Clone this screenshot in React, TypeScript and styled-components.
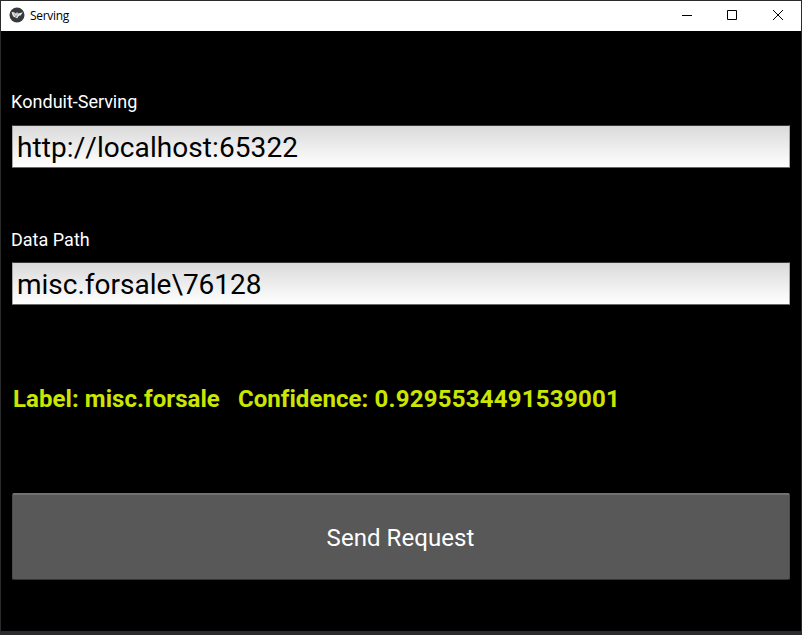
import React from 'react';
import styled, { createGlobalStyle } from 'styled-components';

const GlobalStyle = createGlobalStyle`
  * { box-sizing: border-box; }
  html, body { margin: 0; padding: 0; background: #000; overflow: hidden; }
  button, input { margin: 0; outline: none; }
`;

const Window = styled.div`
  width: 802px;
  height: 635px;
  display: flex;
  flex-direction: column;
  background: #000;
  border: 1px solid #2b2b2b;
  border-bottom: 4px solid #2c2a2e;
  font-family: Roboto, sans-serif;
  font-kerning: none;
  font-variant-ligatures: none;
`;

const TitleBar = styled.header`
  flex: none;
  height: 30px;
  display: flex;
  align-items: center;
  background: #fff;
  color: #000;
  padding-left: 8px;
`;

const AppIcon = styled.svg`
  flex: none;
  width: 16px;
  height: 16px;
  margin-bottom: 2px;
`;

const Title = styled.span`
  flex: 1;
  margin-left: 5px;
  font: 12px/16px 'Open Sans', sans-serif;
  letter-spacing: -0.3px;
`;

const WindowButton = styled.button<{ $shift?: number }>`
  width: 46px;
  height: 30px;
  padding: 0 0 2px ${(p) => p.$shift ?? 0}px;
  border: 0;
  background: transparent;
  display: flex;
  align-items: center;
  justify-content: center;
`;

const Glyph = styled.svg`
  width: 10px;
  height: 10px;
  display: block;
  fill: none;
  stroke: #000;
`;

const Content = styled.main`
  flex: 1;
  display: flex;
  flex-direction: column;
  padding: 60px 11px 0;
`;

const Field = styled.div`
  height: 138px;
`;

const Label = styled.label<{ $height: number }>`
  display: block;
  height: ${(p) => p.$height}px;
  margin-left: -1px;
  color: #fff;
  font-size: 18px;
  line-height: 22px;
`;

const TextInput = styled.input<{ $tracking?: number }>`
  display: block;
  width: 778px;
  height: 43px;
  padding: 2px 4px 0;
  border: 1px solid #a6a6a6;
  border-top-color: #3a3838;
  border-bottom-color: #6a6a6a;
  border-radius: 1px;
  background: linear-gradient(#dadada, #fff);
  color: #000;
  font-family: Roboto, sans-serif;
  font-size: 28px;
  line-height: 40px;
  font-kerning: none;
  letter-spacing: ${(p) => p.$tracking ?? 0}px;
`;

const Result = styled.output`
  display: block;
  height: 126px;
  padding: 17px 0 0 1px;
  color: #cbe600;
  font-size: 24px;
  font-weight: 700;
  line-height: 30px;
  letter-spacing: 0.06px;
  white-space: pre;
`;

const Digits = styled.span`
  letter-spacing: 0.25px;
`;

const SendButton = styled.button`
  width: 778px;
  height: 87px;
  padding: 1px 1px 0 0;
  border: 1px solid #4c4c4c;
  border-top: 2px solid #727272;
  border-bottom-color: #353535;
  border-radius: 2px;
  background: #585858;
  color: #fff;
  font-family: Roboto, sans-serif;
  font-size: 24px;
  line-height: 30px;
  letter-spacing: 0.06px;
`;

export default function App() {
  return (
    <>
      <GlobalStyle />
      <Window>
        <TitleBar>
          <AppIcon viewBox="0 0 16 16">
            <circle cx="8" cy="8" r="7.5" fill="#37393c" />
            <path d="M2.6 5 5.2 5.2 6.5 6.6 8.2 5.2 9.4 6.6 13.8 5.3 11.6 8.4 9.9 8.7 8.1 11.4 6.9 10.6 4.8 10 3.4 7.9Z" fill="#e9eaea" />
            <path d="m4.9 6 2 4.2M8.3 6 7.4 10" stroke="#6c6e70" strokeWidth="0.6" />
          </AppIcon>
          <Title>Serving</Title>
          <WindowButton aria-label="Minimize" $shift={2}>
            <Glyph viewBox="0 0 10 10"><path d="M0 5.5h10" /></Glyph>
          </WindowButton>
          <WindowButton aria-label="Maximize">
            <Glyph viewBox="0 0 10 10"><path d="M.5.5h9v9h-9z" /></Glyph>
          </WindowButton>
          <WindowButton aria-label="Close">
            <Glyph viewBox="0 0 10 10"><path d="m0 0 10 10M10 0 0 10" /></Glyph>
          </WindowButton>
        </TitleBar>
        <Content>
          <Field>
            <Label htmlFor="server" $height={34}>Konduit-Serving</Label>
            <TextInput id="server" $tracking={0.08} defaultValue="http://localhost:65322" />
          </Field>
          <Field>
            <Label htmlFor="path" $height={33}>Data Path</Label>
            <TextInput id="path" defaultValue={'misc.forsale\\76128'} />
          </Field>
          <Result>
            {'Label: misc.forsale   Confidence: '}
            <Digits>0.9295534491539001</Digits>
          </Result>
          <SendButton>Send Request</SendButton>
        </Content>
      </Window>
    </>
  );
}
